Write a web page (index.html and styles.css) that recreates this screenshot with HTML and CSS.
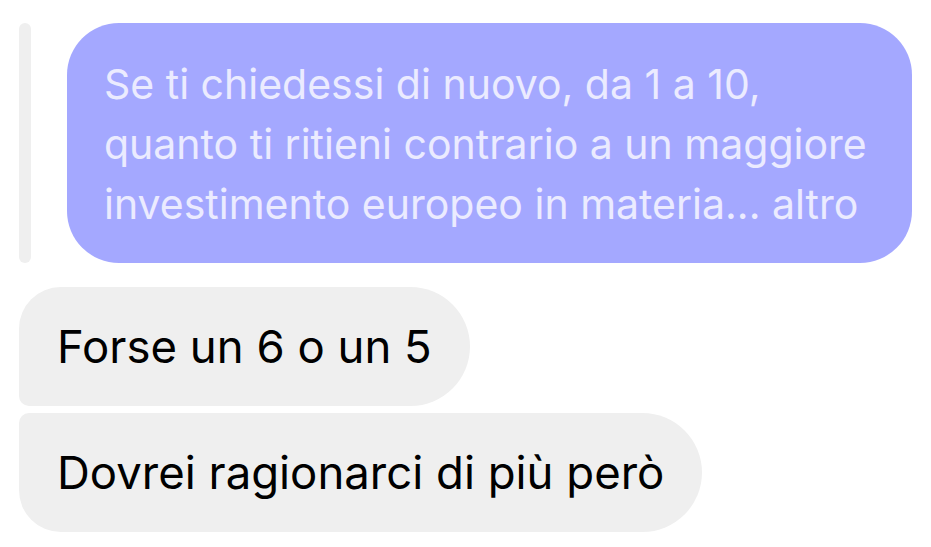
FILE: index.html
```html
<!DOCTYPE html>
<html lang="it">
<head>
    <meta charset="UTF-8">
    <meta name="viewport" content="width=device-width, initial-scale=1.0">
    <title>Messaggi</title>
    <link rel="stylesheet" href="styles.css">
</head>
<body>
    <div class="thread">
        <div class="reply">
            <div class="reply-bar"></div>
            <div class="quoted">
                Se ti chiedessi di nuovo, da 1 a 10,<br>
                quanto ti ritieni contrario a un maggiore<br>
                investimento europeo in materia... altro
            </div>
        </div>

        <div class="group">
            <div class="bubble first">Forse un 6 o un 5</div>
            <div class="bubble last">Dovrei ragionarci di più però</div>
        </div>
    </div>
</body>
</html>
```

FILE: styles.css
```css
body {
    margin: 0;
    padding: 0;
    background: #ffffff;
    font-family: Inter, "Noto Sans", sans-serif;
}

.thread {
    padding: 23px 19px 0 19px;
    display: flex;
    flex-direction: column;
    gap: 24px;
}

.reply {
    display: flex;
    gap: 36px;
    height: 240px;
}

.reply-bar {
    width: 12px;
    flex-shrink: 0;
    background: #efefef;
    border-radius: 6px;
}

.quoted {
    flex: 1;
    background: #a4a8ff;
    color: #ebebff;
    border-radius: 52px;
    padding: 2px 37px 0 37px;
    font-size: 41px;
    line-height: 60px;
    white-space: nowrap;
    display: flex;
    flex-direction: column;
    justify-content: center;
}

.group {
    display: flex;
    flex-direction: column;
    align-items: flex-start;
    gap: 7px;
}

.bubble {
    background: #efefef;
    color: #000000;
    height: 119px;
    box-sizing: border-box;
    padding: 0 38px 0 38px;
    display: flex;
    align-items: center;
    font-size: 45.5px;
}

.bubble.first {
    border-radius: 42px 60px 60px 10px;
}

.bubble.last {
    border-radius: 10px 60px 60px 42px;
}
```
